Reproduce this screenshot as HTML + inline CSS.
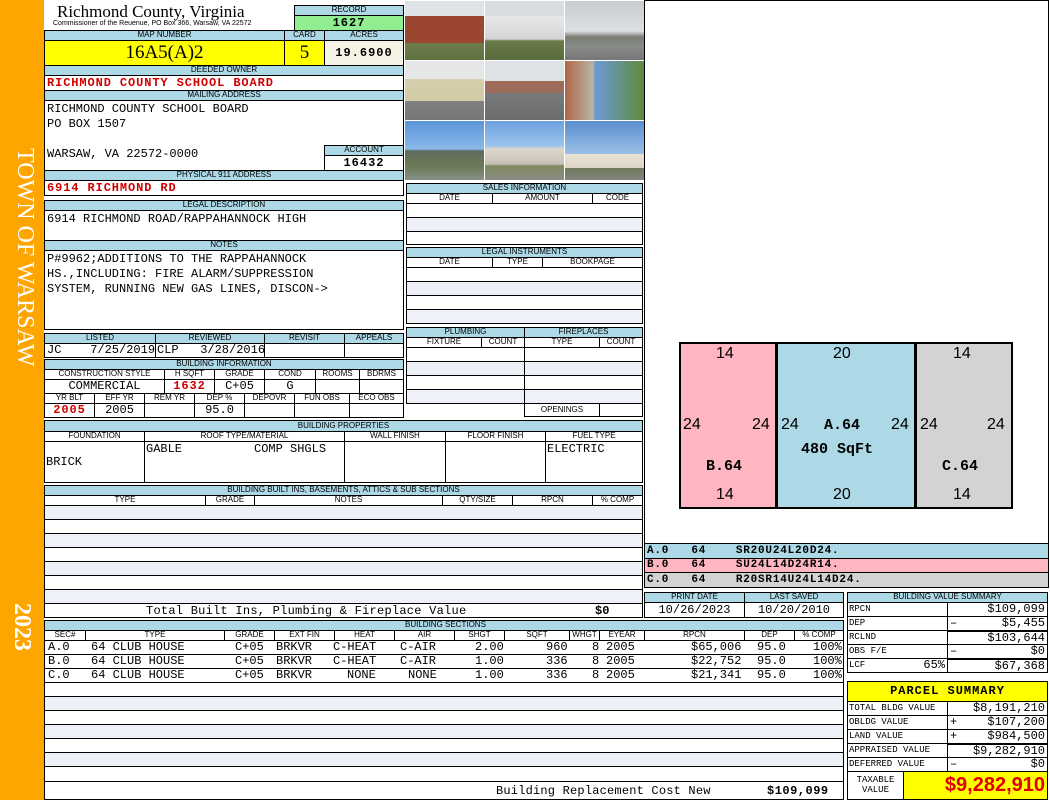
<!DOCTYPE html>
<html><head><meta charset="utf-8"><style>
*{margin:0;padding:0}
body{width:1050px;height:800px;position:relative;background:#fff;overflow:hidden;font-family:"Liberation Sans",sans-serif}
.a{position:absolute;box-sizing:border-box;border:1px solid #000;overflow:hidden;white-space:nowrap}
.n{position:absolute;white-space:nowrap}
.h{background:#add8e6;font-size:8px;text-align:center;line-height:8px;color:#000}
.s{font-size:8px;text-align:center;line-height:8px}
.m{font-family:"Liberation Mono",monospace;font-size:12px}
.r{color:#d00000;font-weight:bold;letter-spacing:0.9px}
.sh{background:#eef2f8}
.ph{position:absolute;width:79px;height:59px}
.ls{letter-spacing:1px}
</style></head><body>
<!-- left orange bar -->
<div class="n" style="left:0;top:0;width:44px;height:800px;background:#ffa500"></div>
<div class="n" style="left:8px;top:148px;width:30px;height:230px;writing-mode:vertical-rl;font:24px 'Liberation Serif',serif;color:#fff">TOWN OF WARSAW</div>
<div class="n" style="left:8px;top:603px;writing-mode:vertical-rl;font:bold 24px 'Liberation Serif',serif;color:#fff">2023</div>

<!-- header -->
<div class="n" style="left:57px;top:2px;font:17px 'Liberation Serif',serif">Richmond County, Virginia</div>
<div class="n" style="left:53px;top:20px;font-size:7px">Commissioner of the Reuenue, PO Box 366, Warsaw, VA 22572</div>
<div class="a h" style="left:294px;top:5px;width:110px;height:11px">RECORD</div>
<div class="a m ls" style="left:294px;top:15px;width:110px;height:16px;background:#90ee90;text-align:center;font-weight:bold;line-height:14px">1627</div>
<div class="a h" style="left:44px;top:30px;width:241px;height:11px">MAP NUMBER</div>
<div class="a h" style="left:284px;top:30px;width:41px;height:11px">CARD</div>
<div class="a h" style="left:324px;top:30px;width:80px;height:11px">ACRES</div>
<div class="a" style="left:44px;top:40px;width:241px;height:26px;background:#ffff00;font:19px 'Liberation Serif',serif;text-align:center;line-height:24px">16A5(A)2</div>
<div class="a" style="left:284px;top:40px;width:41px;height:26px;background:#ffff00;font:19px 'Liberation Serif',serif;text-align:center;line-height:24px">5</div>
<div class="a m ls" style="left:324px;top:40px;width:80px;height:26px;background:#f5f3e6;font-weight:bold;text-align:center;line-height:24px">19.6900</div>
<div class="a h" style="left:44px;top:65px;width:360px;height:11px">DEEDED OWNER</div>
<div class="a m r" style="left:44px;top:75px;width:360px;height:16px;line-height:14px;padding-left:2px">RICHMOND COUNTY SCHOOL BOARD</div>
<div class="a h" style="left:44px;top:90px;width:360px;height:11px">MAILING ADDRESS</div>
<div class="a m" style="left:44px;top:100px;width:360px;height:71px;padding:1px 2px;line-height:15px">RICHMOND COUNTY SCHOOL BOARD<br>PO BOX 1507<br><br>WARSAW, VA 22572-0000</div>
<div class="a h" style="left:324px;top:145px;width:80px;height:11px">ACCOUNT</div>
<div class="a m ls" style="left:324px;top:155px;width:80px;height:16px;text-align:center;font-weight:bold;line-height:14px">16432</div>
<div class="a h" style="left:44px;top:170px;width:360px;height:11px">PHYSICAL 911 ADDRESS</div>
<div class="a m r" style="left:44px;top:180px;width:360px;height:16px;line-height:14px;padding-left:2px">6914 RICHMOND RD</div>
<div class="a h" style="left:44px;top:200px;width:360px;height:11px">LEGAL DESCRIPTION</div>
<div class="a m" style="left:44px;top:210px;width:360px;height:31px;padding:1px 2px;line-height:15px">6914 RICHMOND ROAD/RAPPAHANNOCK HIGH</div>
<div class="a h" style="left:44px;top:240px;width:360px;height:11px">NOTES</div>
<div class="a m" style="left:44px;top:250px;width:360px;height:80px;padding:1px 2px;line-height:15px">P#9962;ADDITIONS TO THE RAPPAHANNOCK<br>HS.,INCLUDING: FIRE ALARM/SUPPRESSION<br>SYSTEM, RUNNING NEW GAS LINES, DISCON-&gt;</div>

<!-- listed -->
<div class="a h" style="left:44px;top:333px;width:112px;height:11px">LISTED</div>
<div class="a h" style="left:155px;top:333px;width:110px;height:11px">REVIEWED</div>
<div class="a h" style="left:264px;top:333px;width:81px;height:11px">REVISIT</div>
<div class="a h" style="left:344px;top:333px;width:60px;height:11px">APPEALS</div>
<div class="a m" style="left:44px;top:343px;width:112px;height:15px;line-height:13px;padding-left:2px">JC&nbsp;&nbsp;&nbsp;&nbsp;7/25/2019</div>
<div class="a m" style="left:155px;top:343px;width:110px;height:15px;line-height:13px;padding-left:1px">CLP&nbsp;&nbsp;&nbsp;3/28/2016</div>
<div class="a" style="left:264px;top:343px;width:81px;height:15px"></div>
<div class="a" style="left:344px;top:343px;width:60px;height:15px"></div>

<!-- building info -->
<div class="a h" style="left:44px;top:359px;width:360px;height:11px">BUILDING INFORMATION</div>
<div class="a s" style="left:44px;top:369px;width:121px;height:11px">CONSTRUCTION STYLE</div>
<div class="a s" style="left:164px;top:369px;width:51px;height:11px">H SQFT</div>
<div class="a s" style="left:214px;top:369px;width:51px;height:11px">GRADE</div>
<div class="a s" style="left:264px;top:369px;width:52px;height:11px">COND</div>
<div class="a s" style="left:315px;top:369px;width:45px;height:11px">ROOMS</div>
<div class="a s" style="left:359px;top:369px;width:45px;height:11px">BDRMS</div>
<div class="a m" style="left:44px;top:379px;width:121px;height:15px;text-align:center;line-height:13px">COMMERCIAL</div>
<div class="a m r" style="left:164px;top:379px;width:51px;height:15px;text-align:center;line-height:13px">1632</div>
<div class="a m" style="left:214px;top:379px;width:51px;height:15px;text-align:center;line-height:13px">C+05</div>
<div class="a m" style="left:264px;top:379px;width:52px;height:15px;text-align:center;line-height:13px">G</div>
<div class="a" style="left:315px;top:379px;width:45px;height:15px"></div>
<div class="a" style="left:359px;top:379px;width:45px;height:15px"></div>
<div class="a s" style="left:44px;top:393px;width:51px;height:11px">YR BLT</div>
<div class="a s" style="left:94px;top:393px;width:51px;height:11px">EFF YR</div>
<div class="a s" style="left:144px;top:393px;width:51px;height:11px">REM YR</div>
<div class="a s" style="left:194px;top:393px;width:51px;height:11px">DEP %</div>
<div class="a s" style="left:244px;top:393px;width:51px;height:11px">DEPOVR</div>
<div class="a s" style="left:294px;top:393px;width:56px;height:11px">FUN OBS</div>
<div class="a s" style="left:349px;top:393px;width:55px;height:11px">ECO OBS</div>
<div class="a m r" style="left:44px;top:403px;width:51px;height:15px;text-align:center;line-height:13px">2005</div>
<div class="a m" style="left:94px;top:403px;width:51px;height:15px;text-align:center;line-height:13px">2005</div>
<div class="a" style="left:144px;top:403px;width:51px;height:15px"></div>
<div class="a m" style="left:194px;top:403px;width:51px;height:15px;text-align:center;line-height:13px">95.0</div>
<div class="a" style="left:244px;top:403px;width:51px;height:15px"></div>
<div class="a" style="left:294px;top:403px;width:56px;height:15px"></div>
<div class="a" style="left:349px;top:403px;width:55px;height:15px"></div>

<!-- building properties -->
<div class="a h" style="left:44px;top:420px;width:599px;height:12px;line-height:10px">BUILDING PROPERTIES</div>
<div class="a s" style="left:44px;top:431px;width:101px;height:11px">FOUNDATION</div>
<div class="a s" style="left:144px;top:431px;width:201px;height:11px">ROOF TYPE/MATERIAL</div>
<div class="a s" style="left:344px;top:431px;width:102px;height:11px">WALL FINISH</div>
<div class="a s" style="left:445px;top:431px;width:101px;height:11px">FLOOR FINISH</div>
<div class="a s" style="left:545px;top:431px;width:98px;height:11px">FUEL TYPE</div>
<div class="a m" style="left:44px;top:441px;width:101px;height:42px;padding:13px 0 0 1px">BRICK</div>
<div class="a m" style="left:144px;top:441px;width:201px;height:42px;padding:0 1px">GABLE&nbsp;&nbsp;&nbsp;&nbsp;&nbsp;&nbsp;&nbsp;&nbsp;&nbsp;&nbsp;COMP SHGLS</div>
<div class="a" style="left:344px;top:441px;width:102px;height:42px"></div>
<div class="a" style="left:445px;top:441px;width:101px;height:42px"></div>
<div class="a m" style="left:545px;top:441px;width:98px;height:42px;padding:0 1px">ELECTRIC</div>

<!-- built ins -->
<div class="a h" style="left:44px;top:485px;width:599px;height:11px">BUILDING BUILT INS, BASEMENTS, ATTICS &amp; SUB SECTIONS</div>
<div class="a s" style="left:44px;top:495px;width:162px;height:11px">TYPE</div>
<div class="a s" style="left:205px;top:495px;width:50px;height:11px">GRADE</div>
<div class="a s" style="left:254px;top:495px;width:189px;height:11px">NOTES</div>
<div class="a s" style="left:442px;top:495px;width:71px;height:11px">QTY/SIZE</div>
<div class="a s" style="left:512px;top:495px;width:81px;height:11px">RPCN</div>
<div class="a s" style="left:592px;top:495px;width:51px;height:11px">% COMP</div>
<div class="a sh" style="left:44px;top:505px;width:599px;height:15px"></div>
<div class="a" style="left:44px;top:519px;width:599px;height:15px"></div>
<div class="a sh" style="left:44px;top:533px;width:599px;height:15px"></div>
<div class="a" style="left:44px;top:547px;width:599px;height:15px"></div>
<div class="a sh" style="left:44px;top:561px;width:599px;height:15px"></div>
<div class="a" style="left:44px;top:575px;width:599px;height:15px"></div>
<div class="a sh" style="left:44px;top:589px;width:599px;height:15px"></div>
<div class="a m" style="left:44px;top:603px;width:599px;height:15px;line-height:14px"><span style="position:absolute;left:101px;letter-spacing:0.25px">Total Built Ins, Plumbing &amp; Fireplace Value</span><span style="position:absolute;left:550px;font-weight:bold">$0</span></div>

<!-- building sections -->
<div class="a h" style="left:44px;top:620px;width:800px;height:11px"><span style="position:absolute;left:360px">BUILDING SECTIONS</span></div>
<div class="a s" style="left:44px;top:630px;width:42px;height:11px">SEC#</div>
<div class="a s" style="left:85px;top:630px;width:140px;height:11px">TYPE</div>
<div class="a s" style="left:224px;top:630px;width:51px;height:11px">GRADE</div>
<div class="a s" style="left:274px;top:630px;width:61px;height:11px">EXT FIN</div>
<div class="a s" style="left:334px;top:630px;width:61px;height:11px">HEAT</div>
<div class="a s" style="left:394px;top:630px;width:61px;height:11px">AIR</div>
<div class="a s" style="left:454px;top:630px;width:51px;height:11px">SHGT</div>
<div class="a s" style="left:504px;top:630px;width:66px;height:11px">SQFT</div>
<div class="a s" style="left:569px;top:630px;width:31px;height:11px">WHGT</div>
<div class="a s" style="left:599px;top:630px;width:46px;height:11px">EYEAR</div>
<div class="a s" style="left:644px;top:630px;width:101px;height:11px">RPCN</div>
<div class="a s" style="left:744px;top:630px;width:51px;height:11px">DEP</div>
<div class="a s" style="left:794px;top:630px;width:50px;height:11px">% COMP</div>
<div class="a m" style="left:44px;top:640px;width:800px;height:15px;line-height:13px"><span style="position:absolute;left:3px">A.0</span><span style="position:absolute;left:46px">64 CLUB HOUSE</span><span style="position:absolute;left:190px">C+05</span><span style="position:absolute;left:231px">BRKVR</span><span style="position:absolute;left:288px">C-HEAT</span><span style="position:absolute;left:355px">C-AIR</span><span style="position:absolute;left:430px">2.00</span><span style="position:absolute;left:501px">960</span><span style="position:absolute;left:547px">8</span><span style="position:absolute;left:561px">2005</span><span style="position:absolute;left:646px">$65,006</span><span style="position:absolute;left:712px">95.0</span><span style="position:absolute;left:768px">100%</span></div>
<div class="a m" style="left:44px;top:654px;width:800px;height:15px;line-height:13px"><span style="position:absolute;left:3px">B.0</span><span style="position:absolute;left:46px">64 CLUB HOUSE</span><span style="position:absolute;left:190px">C+05</span><span style="position:absolute;left:231px">BRKVR</span><span style="position:absolute;left:288px">C-HEAT</span><span style="position:absolute;left:355px">C-AIR</span><span style="position:absolute;left:430px">1.00</span><span style="position:absolute;left:501px">336</span><span style="position:absolute;left:547px">8</span><span style="position:absolute;left:561px">2005</span><span style="position:absolute;left:646px">$22,752</span><span style="position:absolute;left:712px">95.0</span><span style="position:absolute;left:768px">100%</span></div>
<div class="a m" style="left:44px;top:668px;width:800px;height:15px;line-height:13px"><span style="position:absolute;left:3px">C.0</span><span style="position:absolute;left:46px">64 CLUB HOUSE</span><span style="position:absolute;left:190px">C+05</span><span style="position:absolute;left:231px">BRKVR</span><span style="position:absolute;left:302px">NONE</span><span style="position:absolute;left:363px">NONE</span><span style="position:absolute;left:430px">1.00</span><span style="position:absolute;left:501px">336</span><span style="position:absolute;left:547px">8</span><span style="position:absolute;left:561px">2005</span><span style="position:absolute;left:646px">$21,341</span><span style="position:absolute;left:712px">95.0</span><span style="position:absolute;left:768px">100%</span></div>
<div class="a" style="left:44px;top:682px;width:800px;height:15px"></div>
<div class="a sh" style="left:44px;top:696px;width:800px;height:15px"></div>
<div class="a" style="left:44px;top:710px;width:800px;height:15px"></div>
<div class="a sh" style="left:44px;top:724px;width:800px;height:15px"></div>
<div class="a" style="left:44px;top:738px;width:800px;height:15px"></div>
<div class="a sh" style="left:44px;top:752px;width:800px;height:15px"></div>
<div class="a" style="left:44px;top:766px;width:800px;height:16px"></div>
<div class="a m" style="left:44px;top:781px;width:800px;height:19px;line-height:19px"><span style="position:absolute;left:451px;letter-spacing:0.2px">Building Replacement Cost New</span><span style="position:absolute;left:722px;font-weight:bold;letter-spacing:0.5px">$109,099</span></div>

<!-- photos -->
<div class="n" style="left:404px;top:0;width:241px;height:181px;background:#fff"></div>
<div class="ph" style="left:405px;top:1px;background:linear-gradient(#dfe3e6 0,#dfe3e6 15px,#9a4630 15px,#9a4630 42px,#6f7d4c 42px,#5f7040 59px)"></div>
<div class="ph" style="left:485px;top:1px;background:linear-gradient(#d8dde0 0,#d8dde0 15px,#e8e8ea 15px,#d5d5d8 38px,#687a46 40px,#5a6c3d 59px)"></div>
<div class="ph" style="left:565px;top:1px;background:linear-gradient(#c8ccd0 0,#dde0e2 30px,#7b7e72 36px,#888c88 45px,#777 59px)"></div>
<div class="ph" style="left:405px;top:61px;background:linear-gradient(#e4e6e8 0,#e4e6e8 18px,#d8cfae 18px,#d2c9a6 40px,#808080 40px,#777 59px)"></div>
<div class="ph" style="left:485px;top:61px;background:linear-gradient(#dfe2e5 0,#dfe2e5 20px,#a06a56 20px,#9c6c5a 32px,#7a7b7c 32px,#6a6b6c 59px)"></div>
<div class="ph" style="left:565px;top:61px;background:linear-gradient(90deg,#b06548 0,#b8b6a6 28px,#6c9ad6 30px,#5f8a3c 79px)"></div>
<div class="ph" style="left:405px;top:121px;background:linear-gradient(#5a94d8 0,#8ab8ea 28px,#5e6a5c 30px,#6a7a56 45px,#8a8f88 59px)"></div>
<div class="ph" style="left:485px;top:121px;background:linear-gradient(#6ca0de 0,#9cc4ee 25px,#ded8cc 28px,#c8c0b4 43px,#7e8a5e 45px,#8c8c88 59px)"></div>
<div class="ph" style="left:565px;top:121px;background:linear-gradient(#5a8ed0 0,#9bbfe6 33px,#e8e2d6 33px,#ddd6c8 47px,#6e7a5a 47px,#858580 59px)"></div>

<!-- sales info -->
<div class="a h" style="left:406px;top:183px;width:237px;height:11px">SALES INFORMATION</div>
<div class="a s" style="left:406px;top:193px;width:87px;height:11px">DATE</div>
<div class="a s" style="left:492px;top:193px;width:101px;height:11px">AMOUNT</div>
<div class="a s" style="left:592px;top:193px;width:51px;height:11px">CODE</div>
<div class="a" style="left:406px;top:203px;width:237px;height:15px"></div>
<div class="a sh" style="left:406px;top:217px;width:237px;height:15px"></div>
<div class="a" style="left:406px;top:231px;width:237px;height:14px"></div>
<div class="a h" style="left:406px;top:247px;width:237px;height:11px">LEGAL INSTRUMENTS</div>
<div class="a s" style="left:406px;top:257px;width:87px;height:11px">DATE</div>
<div class="a s" style="left:492px;top:257px;width:51px;height:11px">TYPE</div>
<div class="a s" style="left:542px;top:257px;width:101px;height:11px">BOOKPAGE</div>
<div class="a" style="left:406px;top:267px;width:237px;height:15px"></div>
<div class="a sh" style="left:406px;top:281px;width:237px;height:15px"></div>
<div class="a" style="left:406px;top:295px;width:237px;height:15px"></div>
<div class="a sh" style="left:406px;top:309px;width:237px;height:15px"></div>

<!-- plumbing / fireplaces -->
<div class="a h" style="left:406px;top:327px;width:119px;height:11px">PLUMBING</div>
<div class="a h" style="left:524px;top:327px;width:119px;height:11px">FIREPLACES</div>
<div class="a s" style="left:406px;top:337px;width:76px;height:11px">FIXTURE</div>
<div class="a s" style="left:481px;top:337px;width:44px;height:11px">COUNT</div>
<div class="a s" style="left:524px;top:337px;width:76px;height:11px">TYPE</div>
<div class="a s" style="left:599px;top:337px;width:44px;height:11px">COUNT</div>
<div class="a" style="left:406px;top:347px;width:119px;height:15px"></div>
<div class="a sh" style="left:406px;top:361px;width:119px;height:15px"></div>
<div class="a" style="left:406px;top:375px;width:119px;height:15px"></div>
<div class="a sh" style="left:406px;top:389px;width:119px;height:15px"></div>
<div class="a" style="left:524px;top:347px;width:119px;height:15px"></div>
<div class="a sh" style="left:524px;top:361px;width:119px;height:15px"></div>
<div class="a" style="left:524px;top:375px;width:119px;height:15px"></div>
<div class="a sh" style="left:524px;top:389px;width:119px;height:15px"></div>
<div class="a s" style="left:524px;top:403px;width:76px;height:14px;line-height:12px">OPENINGS</div>
<div class="a" style="left:599px;top:403px;width:44px;height:14px"></div>

<!-- sketch area -->
<div class="a" style="left:644px;top:0;width:405px;height:544px"></div>
<div class="a" style="left:679px;top:342px;width:98px;height:167px;background:#ffb6c1;border-width:2px"></div>
<div class="a" style="left:776px;top:342px;width:140px;height:167px;background:#add8e6;border-width:2px"></div>
<div class="a" style="left:915px;top:342px;width:98px;height:167px;background:#d3d3d3;border-width:2px"></div>
<div class="n" style="left:716px;top:345px;font-size:16px">14</div>
<div class="n" style="left:833px;top:345px;font-size:16px">20</div>
<div class="n" style="left:953px;top:345px;font-size:16px">14</div>
<div class="n" style="left:716px;top:486px;font-size:16px">14</div>
<div class="n" style="left:833px;top:486px;font-size:16px">20</div>
<div class="n" style="left:953px;top:486px;font-size:16px">14</div>
<div class="n" style="left:683px;top:416px;font-size:16px">24</div>
<div class="n" style="left:752px;top:416px;font-size:16px">24</div>
<div class="n" style="left:781px;top:416px;font-size:16px">24</div>
<div class="n" style="left:891px;top:416px;font-size:16px">24</div>
<div class="n" style="left:920px;top:416px;font-size:16px">24</div>
<div class="n" style="left:987px;top:416px;font-size:16px">24</div>
<div class="n m" style="left:824px;top:417px;font-size:15px;font-weight:bold">A.64</div>
<div class="n m" style="left:801px;top:441px;font-size:15px;font-weight:bold">480 SqFt</div>
<div class="n m" style="left:706px;top:458px;font-size:15px;font-weight:bold">B.64</div>
<div class="n m" style="left:942px;top:458px;font-size:15px;font-weight:bold">C.64</div>

<div class="a m" style="left:644px;top:543px;width:405px;height:16px;background:#add8e6;line-height:14px;font-size:11px;font-weight:bold;padding-left:2px;letter-spacing:0.8px">A.0&nbsp;&nbsp;&nbsp;64&nbsp;&nbsp;&nbsp;&nbsp;SR20U24L20D24.</div>
<div class="a m" style="left:644px;top:558px;width:405px;height:15px;background:#ffb6c1;line-height:13px;font-size:11px;font-weight:bold;padding-left:2px;letter-spacing:0.8px">B.0&nbsp;&nbsp;&nbsp;64&nbsp;&nbsp;&nbsp;&nbsp;SU24L14D24R14.</div>
<div class="a m" style="left:644px;top:572px;width:405px;height:16px;background:#d3d3d3;line-height:14px;font-size:11px;font-weight:bold;padding-left:2px;letter-spacing:0.8px">C.0&nbsp;&nbsp;&nbsp;64&nbsp;&nbsp;&nbsp;&nbsp;R20SR14U24L14D24.</div>

<!-- print date -->
<div class="a h" style="left:644px;top:592px;width:101px;height:11px">PRINT DATE</div>
<div class="a h" style="left:744px;top:592px;width:100px;height:11px">LAST SAVED</div>
<div class="a m" style="left:644px;top:602px;width:101px;height:16px;text-align:center;line-height:14px">10/26/2023</div>
<div class="a m" style="left:744px;top:602px;width:100px;height:16px;text-align:center;line-height:14px">10/20/2010</div>

<!-- building value summary -->
<div class="a h" style="left:847px;top:592px;width:201px;height:11px">BUILDING VALUE SUMMARY</div>
<div class="a m" style="left:847px;top:602px;width:101px;height:15px;font-size:9px;line-height:13px;padding-left:1px">RPCN</div>
<div class="a m" style="left:947px;top:602px;width:101px;height:15px;text-align:right;line-height:13px;padding-right:2px">$109,099</div>
<div class="a m" style="left:847px;top:616px;width:101px;height:15px;font-size:9px;line-height:13px;padding-left:1px">DEP</div>
<div class="a m" style="left:947px;top:616px;width:101px;height:15px;text-align:right;line-height:13px;padding:0 2px"><span style="float:left">–</span>$5,455</div>
<div class="a m" style="left:847px;top:630px;width:101px;height:15px;font-size:9px;line-height:13px;padding-left:1px">RCLND</div>
<div class="a m" style="left:947px;top:630px;width:101px;height:15px;text-align:right;line-height:13px;padding-right:2px;border-top-width:2px">$103,644</div>
<div class="a m" style="left:847px;top:644px;width:101px;height:15px;font-size:9px;line-height:13px;padding-left:1px">OBS F/E</div>
<div class="a m" style="left:947px;top:644px;width:101px;height:15px;text-align:right;line-height:13px;padding:0 2px"><span style="float:left">–</span>$0</div>
<div class="a m" style="left:847px;top:658px;width:101px;height:15px;font-size:9px;line-height:13px;padding:0 2px 0 1px">LCF<span style="float:right;font-size:12px">65%</span></div>
<div class="a m" style="left:947px;top:658px;width:101px;height:15px;text-align:right;line-height:13px;padding-right:2px;border-top-width:2px">$67,368</div>

<!-- parcel summary -->
<div class="a m" style="left:847px;top:681px;width:201px;height:21px;background:#ffff00;text-align:center;font-weight:bold;line-height:19px;letter-spacing:1px">PARCEL SUMMARY</div>
<div class="a m" style="left:847px;top:701px;width:101px;height:15px;font-size:9px;line-height:13px;padding-left:1px">TOTAL BLDG VALUE</div>
<div class="a m" style="left:947px;top:701px;width:101px;height:15px;text-align:right;line-height:13px;padding-right:2px">$8,191,210</div>
<div class="a m" style="left:847px;top:715px;width:101px;height:15px;font-size:9px;line-height:13px;padding-left:1px">OBLDG VALUE</div>
<div class="a m" style="left:947px;top:715px;width:101px;height:15px;text-align:right;line-height:13px;padding:0 2px"><span style="float:left">+</span>$107,200</div>
<div class="a m" style="left:847px;top:729px;width:101px;height:15px;font-size:9px;line-height:13px;padding-left:1px">LAND VALUE</div>
<div class="a m" style="left:947px;top:729px;width:101px;height:15px;text-align:right;line-height:13px;padding:0 2px"><span style="float:left">+</span>$984,500</div>
<div class="a m" style="left:847px;top:743px;width:101px;height:15px;font-size:9px;line-height:13px;padding-left:1px">APPRAISED VALUE</div>
<div class="a m" style="left:947px;top:743px;width:101px;height:15px;text-align:right;line-height:13px;padding-right:2px;border-top-width:2px">$9,282,910</div>
<div class="a m" style="left:847px;top:757px;width:101px;height:15px;font-size:9px;line-height:13px;padding-left:1px">DEFERRED VALUE</div>
<div class="a m" style="left:947px;top:757px;width:101px;height:15px;text-align:right;line-height:13px;padding:0 2px"><span style="float:left">–</span>$0</div>
<div class="a m" style="left:847px;top:771px;width:57px;height:29px;font-size:9px;line-height:10px;text-align:center;padding-top:3px">TAXABLE<br>VALUE</div>
<div class="a" style="left:903px;top:771px;width:145px;height:29px;background:#ffff00;color:#e00000;font:bold 20px 'Liberation Sans',sans-serif;text-align:right;line-height:26px;padding-right:2px">$9,282,910</div>
</body></html>
